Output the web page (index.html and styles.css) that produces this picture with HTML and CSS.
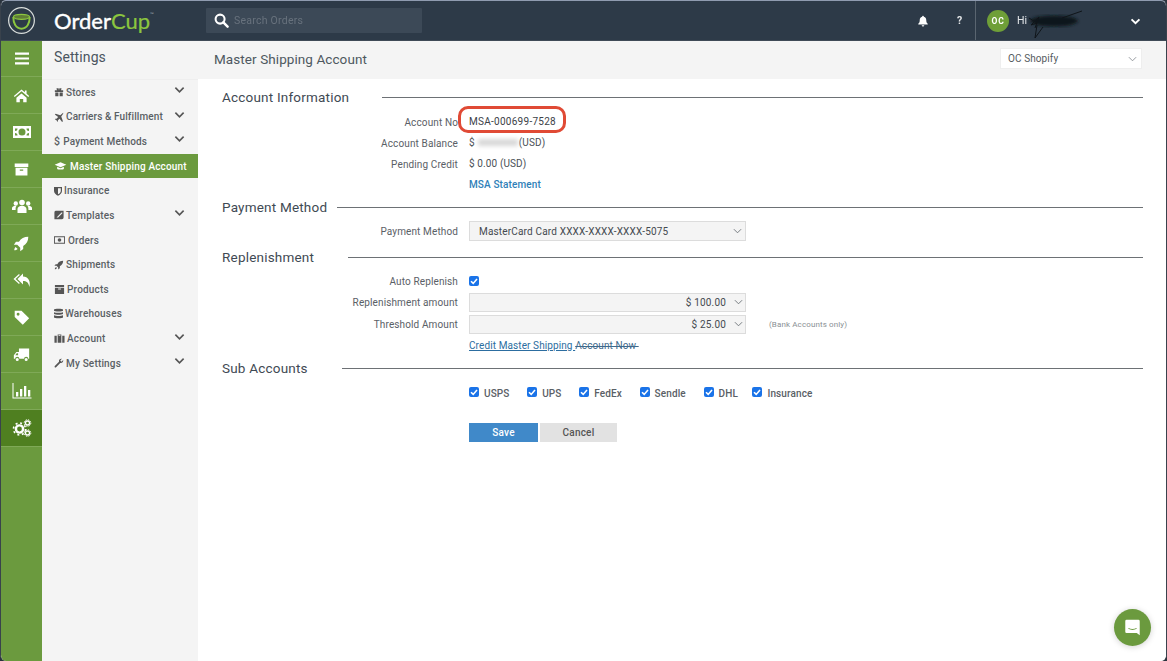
FILE: index.html
```html
<!DOCTYPE html>
<html lang="en">
<head>
<meta charset="utf-8">
<title>Master Shipping Account</title>
<link rel="stylesheet" href="styles.css">
</head>
<body>
<div class="app">
  <header class="topbar">
    <div class="brand">
      <svg class="logo" viewBox="0 0 30 30"><circle cx="15" cy="15" r="13.300" fill="none" stroke="#d5dad8" stroke-width="1.300"/><path d="M6.500 11.500C6.500 17.500 9 23.500 15 23.500S23.500 17.500 23.500 11.500" fill="none" stroke="#8cc63f" stroke-width="2"/><ellipse cx="15" cy="11.200" rx="8.300" ry="2.600" fill="#5f7d36" stroke="#8cc63f" stroke-width="1.200"/></svg>
      <span class="wordmark">Order<span class="wordmark-cup">Cup</span><sup class="tm">™</sup></span>
    </div>
    <div class="search">
      <svg class="search-icon" viewBox="0 0 16 16"><circle cx="6.500" cy="6.500" r="4.800" fill="none" stroke="#fff" stroke-width="2.200"/><path d="M10 10l4.500 4.500" stroke="#fff" stroke-width="2.600" stroke-linecap="round"/></svg>
      <span class="search-text">Search Orders</span>
    </div>
    <div class="top-actions">
      <svg class="bell" viewBox="0 0 14 14"><path d="M7 1a1 1 0 0 1 1 1c2 .5 2.800 2 2.800 4 0 2.500 1 3.500 1.700 4.300v.7h-11v-.7C2.200 9.500 3.200 8.500 3.200 6c0-2 .8-3.500 2.800-4a1 1 0 0 1 1-1zM5.500 12h3a1.500 1.500 0 0 1-3 0z" fill="#fff"/></svg>
      <span class="help">?</span>
    </div>
    <div class="user">
      <span class="avatar">OC</span>
      <span class="hi">Hi</span>
      <svg class="scribble" viewBox="0 0 60 36"><defs><filter id="sb"><feGaussianBlur stdDeviation="1.800"/></filter></defs><ellipse cx="28" cy="17" rx="24" ry="5.500" fill="#10151a" filter="url(#sb)"/><path d="M3 14l8 5-6 2 8-8-4 11M11 21l-2 13 8-11M36 14L56 7" stroke="#10151a" stroke-width="1" fill="none"/></svg>
      <svg class="user-chev" viewBox="0 0 12 8"><path d="M1.500 1.500L6 6l4.500-4.500" fill="none" stroke="#fff" stroke-width="2.200"/></svg>
    </div>
  </header>

  <div class="body">
    <nav class="rail">
      <a class="rail-item rail-lg"><svg viewBox="0 0 20 20"><path d="M3 3.500h14v2.200H3zM3 8.400h14v2.200H3zM3 13.300h14v2.200H3z" fill="#fff"/></svg></a>
      <a class="rail-item"><svg viewBox="0 0 20 20"><path d="M10 3L1 10.500l1 1.200 8-6.700 8 6.700 1-1.200-3-2.500V4h-2v2.200zM4 12.500L10 7.500l6 5V18h-4v-4H8v4H4z" fill="#fff"/></svg></a>
      <a class="rail-item rail-lg"><svg viewBox="0 0 20 20"><path fill-rule="evenodd" d="M1 4h18v12H1zM3 6.500v7h2.500a2.500 2.500 0 0 0-2.500-2.500V9a2.500 2.500 0 0 0 2.500-2.500zm14 0h-2.500A2.500 2.500 0 0 0 17 9v2a2.500 2.500 0 0 0-2.500 2.500H17zM10 6.500a3.500 3.500 0 1 0 0 7 3.500 3.500 0 0 0 0-7z" fill="#fff"/></svg></a>
      <a class="rail-item"><svg viewBox="0 0 20 20"><path fill-rule="evenodd" d="M2 3h16v4H2zM3 8h14v9H3zM8 10v1.500h4V10z" fill="#fff"/></svg></a>
      <a class="rail-item rail-lg"><svg viewBox="0 0 20 20"><g fill="#fff"><circle cx="10" cy="6.500" r="2.800"/><circle cx="3.800" cy="7.500" r="2.200"/><circle cx="16.200" cy="7.500" r="2.200"/><path d="M5.500 17v-4c0-2 2-3.300 4.500-3.300s4.500 1.300 4.500 3.300v4zM0 14v-2c0-1.300 1.500-2.300 3.500-2.300l1 .3c-.6.700-.9 1.500-.9 3v1zM20 14v-2c0-1.300-1.500-2.300-3.500-2.300l-1 .3c.6.700.9 1.500.9 3v1z"/></g></svg></a>
      <a class="rail-item"><svg viewBox="0 0 20 20"><path d="M18 2c-5 0-8.500 2-11 6H3.500L1 11.500h4L8.500 15v4l3.500-2.500V13c4-2.500 6-6 6-11zM3 14c-1 1-1.500 2.500-1.500 4 1.500 0 3-.5 4-1.500z" fill="#fff"/></svg></a>
      <a class="rail-item rail-lg"><svg viewBox="0 0 20 20"><path d="M11 3.500L5.500 9l5.500 5.500V11c3.500 0 5.500 1.500 6.500 6 1.300-6-1.500-10.500-6.500-10.500zM7 4L1.500 9 7 14l.8-.9L3.500 9l4.300-4.100z" fill="#fff"/></svg></a>
      <a class="rail-item"><svg viewBox="0 0 20 20"><path fill-rule="evenodd" d="M2 2h8l9 9-7.500 7.500-9.500-9zM6 4.500a1.700 1.700 0 1 0 0 3.400 1.700 1.700 0 0 0 0-3.400z" fill="#fff"/></svg></a>
      <a class="rail-item"><svg viewBox="0 0 20 20"><path fill-rule="evenodd" d="M7 3h12v12h-1a2.500 2.500 0 0 0-5 0H7.500a2.500 2.500 0 0 0-5 0H1v-4l3-4h3zM6 8.500H4.300L2.800 11H6zM5 14a1.800 1.800 0 1 1 0 3.600A1.800 1.800 0 0 1 5 14zm10.500 0a1.800 1.800 0 1 1 0 3.600 1.800 1.800 0 0 1 0-3.600z" fill="#fff"/></svg></a>
      <a class="rail-item rail-lg"><svg viewBox="0 0 20 20"><path d="M.5 2h1v14.500h18v1H.5zM4 11h2.300v4.500H4zM8 8h2.300v7.500H8zM12 5h2.300v10.500H12zM16 9h2.300v6.500H16z" fill="#fff"/></svg></a>
      <a class="rail-item rail-item-active rail-lg"><svg viewBox="0 0 20 20"><g fill="none" stroke="#fff"><circle cx="7.500" cy="11" r="3.600" stroke-width="2.400"/><circle cx="7.500" cy="11" r="6" stroke-width="1.600" stroke-dasharray="2 2.700"/><circle cx="15.500" cy="5" r="2" stroke-width="1.300"/><circle cx="15.500" cy="5" r="3.300" stroke-width="1" stroke-dasharray="1.500 1.100"/><circle cx="15.500" cy="15" r="2" stroke-width="1.300"/><circle cx="15.500" cy="15" r="3.300" stroke-width="1" stroke-dasharray="1.500 1.100"/></g></svg></a>
    </nav>

    <aside class="side">
      <h2 class="side-title">Settings</h2>
      <ul class="side-list">
        <li class="side-item"><svg class="si" viewBox="0 0 12 12"><path d="M1 4h10v2H1zM1.500 6.500h3.800V11H1.500zM6.700 6.500h3.800V11H6.700zM3 1.500h2.500L6 4H3.500zM9 1.500H6.500L6 4h2.500z" fill="#555"/></svg><span>Stores</span><svg class="chev" viewBox="0 0 12 8"><path d="M1.500 1.500L6 6l4.500-4.500" fill="none" stroke="#555" stroke-width="1.800"/></svg></li>
        <li class="side-item"><svg class="si" viewBox="0 0 12 12"><path d="M11 1L7.500 4 2 2 1 3l4 3-2 2H1.500L1 8.800l2 1 1 2 .7-.5V10l2-2 3 4 1-1-2-5.500L11 2z" fill="#555"/></svg><span class="tight">Carriers &amp; Fulfillment</span><svg class="chev" viewBox="0 0 12 8"><path d="M1.500 1.500L6 6l4.500-4.500" fill="none" stroke="#555" stroke-width="1.800"/></svg></li>
        <li class="side-item"><span class="dollar">$</span><span>Payment Methods</span><svg class="chev" viewBox="0 0 12 8"><path d="M1.500 1.500L6 6l4.500-4.500" fill="none" stroke="#555" stroke-width="1.800"/></svg></li>
        <li class="side-item side-item-active"><svg class="si si-wide" viewBox="0 0 14 12"><path d="M7 1.500L0 4.500l7 3 7-3zM3 7v2.500c1 1 7 1 8 0V7L7 8.700z" fill="#fff"/></svg><span>Master Shipping Account</span></li>
        <li class="side-item"><svg class="si si-narrow" viewBox="0 0 10 12"><path fill-rule="evenodd" d="M0 1h10v5c0 3-2.500 4.500-5 6-2.500-1.500-5-3-5-6zM5 2.500v7.700C6.800 9 8.500 8 8.500 6V2.500z" fill="#555"/></svg><span>Insurance</span></li>
        <li class="side-item"><svg class="si" viewBox="0 0 12 12"><path fill-rule="evenodd" d="M2 1h9.500v8a2 2 0 0 1-2 2H.5V3a2 2 0 0 1 1.500-2zM9 3L3 9h2l5-5V3z" fill="#555"/></svg><span>Templates</span><svg class="chev" viewBox="0 0 12 8"><path d="M1.500 1.500L6 6l4.500-4.500" fill="none" stroke="#555" stroke-width="1.800"/></svg></li>
        <li class="side-item"><svg class="si si-orders" viewBox="0 0 12 10"><path fill-rule="evenodd" d="M0 1h12v8H0zM1 2v6h10V2zM6 3a2 2 0 1 1 0 4 2 2 0 0 1 0-4z" fill="#555"/></svg><span>Orders</span></li>
        <li class="side-item"><svg class="si" viewBox="0 0 12 12"><path d="M11 1C8 1 5.500 2.300 4 5H2L.5 7H3l2 2v2.500L7 10V7.500C9.500 6 11 4 11 1zM2.500 8.500C1.500 9 1 10 1 11c1 0 2-.5 2.500-1.500z" fill="#555"/></svg><span>Shipments</span></li>
        <li class="side-item"><svg class="si si-box" viewBox="0 0 12 12"><path fill-rule="evenodd" d="M1 1h10v10H1zM1 4h10v-.8H1zM4.500 5v1h3V5z" fill="#555"/></svg><span>Products</span></li>
        <li class="side-item"><svg class="si si-db" viewBox="0 0 10 12"><path d="M0 1.500C0 .5 10 .5 10 1.500V3C10 4 0 4 0 3zM0 4.500c2 1 8 1 10 0V6.500c-2 1-8 1-10 0zM0 8c2 1 8 1 10 0v2.500c0 1-10 1-10 0z" fill="#555"/></svg><span>Warehouses</span></li>
        <li class="side-item"><svg class="si si-box" viewBox="0 0 12 12"><path fill-rule="evenodd" d="M4 3V1.500h4V3h3.500v7.500H.5V3zM5 3h2v-.7H5zM3 3v7.500h1V3zM8 3v7.500h1V3z" fill="#555"/></svg><span>Account</span><svg class="chev" viewBox="0 0 12 8"><path d="M1.500 1.500L6 6l4.500-4.500" fill="none" stroke="#555" stroke-width="1.800"/></svg></li>
        <li class="side-item"><svg class="si" viewBox="0 0 12 12"><path d="M11 2.500L9 4.500 7.500 3l2-2C7.500.5 5.500 2 6 4.500L1 9.500c-1 1 .5 2.500 1.500 1.500L7.500 6C10 6.500 11.500 4.500 11 2.500z" fill="#555"/></svg><span>My Settings</span><svg class="chev" viewBox="0 0 12 8"><path d="M1.500 1.500L6 6l4.500-4.500" fill="none" stroke="#555" stroke-width="1.800"/></svg></li>
      </ul>
    </aside>

    <main class="main">
      <div class="page-head">
        <h1 class="page-title">Master Shipping Account</h1>
        <div class="store-select"><span>OC Shopify</span><svg class="sel-chev" viewBox="0 0 10 6"><path d="M1 1l4 4 4-4" fill="none" stroke="#8a8f94" stroke-width="1"/></svg></div>
      </div>

      <div class="content">
        <section class="sec sec-info">
          <div class="sec-head"><h3 class="sec-title sec-title-info">Account Information</h3><span class="sec-line"></span></div>
          <div class="row row-first"><span class="lbl">Account No</span><span class="val val-mark">MSA-000699-7528<span class="mark"></span></span></div>
          <div class="row"><span class="lbl">Account Balance</span><span class="val">$<span class="smudge"></span>(USD)</span></div>
          <div class="row"><span class="lbl">Pending Credit</span><span class="val">$ 0.00 (USD)</span></div>
          <div class="row"><span class="lbl"></span><a class="val link">MSA Statement</a></div>
        </section>

        <section class="sec sec-pay">
          <div class="sec-head"><h3 class="sec-title sec-title-pay">Payment Method</h3><span class="sec-line"></span></div>
          <div class="row row-field row-pay"><span class="lbl">Payment Method</span><div class="field"><span>MasterCard Card XXXX-XXXX-XXXX-5075</span><svg class="sel-chev" viewBox="0 0 10 6"><path d="M1 1l4 4 4-4" fill="none" stroke="#6a7075" stroke-width="1"/></svg></div></div>
        </section>

        <section class="sec sec-rep">
          <div class="sec-head"><h3 class="sec-title sec-title-rep">Replenishment</h3><span class="sec-line"></span></div>
          <div class="row row-check"><span class="lbl">Auto Replenish</span><span class="box"><svg viewBox="0 0 10 10"><path d="M2 5.200l2.200 2.200L8 3" fill="none" stroke="#fff" stroke-width="1.600"/></svg></span></div>
          <div class="row row-field row-amt"><span class="lbl">Replenishment amount</span><div class="field field-amt"><span>$ 100.00</span><svg class="sel-chev" viewBox="0 0 10 6"><path d="M1 1l4 4 4-4" fill="none" stroke="#6a7075" stroke-width="1"/></svg></div></div>
          <div class="row row-field row-amt"><span class="lbl">Threshold Amount</span><div class="field field-amt"><span>$ 25.00</span><svg class="sel-chev" viewBox="0 0 10 6"><path d="M1 1l4 4 4-4" fill="none" stroke="#6a7075" stroke-width="1"/></svg></div><span class="hint">(Bank Accounts only)</span></div>
          <div class="row row-credit"><span class="lbl"></span><a class="credit"><span class="credit-under">Credit Master Shipping </span><span class="credit-strike">Account Now&nbsp;</span></a></div>
        </section>

        <section class="sec sec-sub">
          <div class="sec-head"><h3 class="sec-title sec-title-sub">Sub Accounts</h3><span class="sec-line"></span></div>
          <div class="row row-subs"><span class="lbl"></span>
            <div class="checks">
              <span class="check"><span class="box"><svg viewBox="0 0 10 10"><path d="M2 5.200l2.200 2.200L8 3" fill="none" stroke="#fff" stroke-width="1.600"/></svg></span>USPS</span>
              <span class="check"><span class="box"><svg viewBox="0 0 10 10"><path d="M2 5.200l2.200 2.200L8 3" fill="none" stroke="#fff" stroke-width="1.600"/></svg></span>UPS</span>
              <span class="check"><span class="box"><svg viewBox="0 0 10 10"><path d="M2 5.200l2.200 2.200L8 3" fill="none" stroke="#fff" stroke-width="1.600"/></svg></span>FedEx</span>
              <span class="check"><span class="box"><svg viewBox="0 0 10 10"><path d="M2 5.200l2.200 2.200L8 3" fill="none" stroke="#fff" stroke-width="1.600"/></svg></span>Sendle</span>
              <span class="check"><span class="box"><svg viewBox="0 0 10 10"><path d="M2 5.200l2.200 2.200L8 3" fill="none" stroke="#fff" stroke-width="1.600"/></svg></span>DHL</span>
              <span class="check"><span class="box"><svg viewBox="0 0 10 10"><path d="M2 5.200l2.200 2.200L8 3" fill="none" stroke="#fff" stroke-width="1.600"/></svg></span>Insurance</span>
            </div>
          </div>
          <div class="row row-btns"><span class="lbl"></span><div class="btns"><button class="btn btn-save">Save</button><button class="btn btn-cancel">Cancel</button></div></div>
        </section>
      </div>
    </main>
  </div>

  <div class="chat"><svg viewBox="0 0 20 20"><path fill-rule="evenodd" d="M3 1h14a1.500 1.500 0 0 1 1.500 1.500V19l-3.500-2.500H3A1.500 1.500 0 0 1 1.500 15V2.500A1.500 1.500 0 0 1 3 1zM5 11.500c3 1.800 7 1.800 10 0l-.4-.9c-2.800 1.500-6.400 1.500-9.200 0z" fill="#fff"/></svg></div>
</div>
</body>
</html>
```
FILE: styles.css
```css
* { box-sizing: border-box; }
html, body { margin: 0; height: 100%; overflow: hidden; background: #2a333d; }
body { font-family: Roboto, "Liberation Sans", sans-serif; color: #4a5056; }
h1, h2, h3, ul { margin: 0; padding: 0; font-weight: 400; }
ul { list-style: none; }

.app { position: relative; width: 1167px; height: 661px; display: flex; flex-direction: column; background: #fff; overflow: hidden; border-radius: 6px; border-top: 1px solid #8f9bb0; border-left: 1px solid #39424c; border-right: 1px solid #39424c; filter: blur(.45px); }

.topbar { flex: 0 0 40px; display: flex; align-items: center; background: #2d3a48; color: #fff; border-bottom: 1px solid #3f4a57; }
.brand { width: 205px; display: flex; align-items: center; }
.logo { width: 29px; height: 29px; margin-left: 6px; }
.wordmark { margin-left: 18px; font-family: Lato, Roboto, sans-serif; font-size: 22px; font-weight: 400; line-height: 30px; color: #fff; -webkit-text-stroke: .4px #fff; }
.wordmark-cup { color: #8cc63f; -webkit-text-stroke: .2px #8cc63f; }
.tm { font-size: 5px; color: #9ba5ad; vertical-align: 13px; line-height: 0; -webkit-text-stroke: 0; }

.search { width: 216px; height: 25px; display: flex; align-items: center; background: #3c4957; border-radius: 1px; }
.search-icon { width: 15px; height: 15px; margin-left: 8px; }
.search-text { margin-left: 5px; font-size: 10.500px; letter-spacing: .25px; color: #68727d; }

.top-actions { margin-left: auto; display: flex; align-items: center; height: 100%; }
.bell { width: 12px; height: 12px; margin-right: 28px; }
.help { width: 7px; margin-right: 11px; font-size: 10.500px; font-weight: 700; color: #e4e6e8; }

.user { width: 191px; height: 100%; display: flex; align-items: center; border-left: 1px solid #5a6570; position: relative; }
.avatar { width: 22px; height: 22px; margin-left: 11px; display: flex; align-items: center; justify-content: center; border-radius: 50%; background: #6f9f38; font-size: 8.500px; font-weight: 700; letter-spacing: .7px; color: #fff; }
.hi { margin-left: 8px; font-size: 10.500px; color: #e2e5e8; }
.scribble { position: absolute; left: 50px; top: 3px; width: 60px; height: 36px; }
.user-chev { position: absolute; left: 154px; top: 17px; width: 11px; height: 7px; }

.body { flex: 1; min-height: 0; display: flex; }

.rail { flex: 0 0 41px; background: #6b9a3e; display: flex; flex-direction: column; }
.rail-item { flex: 0 0 37px; display: flex; align-items: center; justify-content: center; border-bottom: 1px solid #7fa957; }
.rail-item:first-child { flex-basis: 36px; }
.rail-item svg { width: 17px; height: 17px; }
.rail-lg svg { width: 20px; height: 20px; }
.rail-item-active { background: #4f7f20; }

.side { flex: 0 0 156px; background: #f4f4f4; display: flex; flex-direction: column; }
.side-title { flex: none; height: 38.900px; padding-left: 12px; font-size: 14px; line-height: 33px; letter-spacing: .1px; color: #4a5560; border-bottom: 1px solid #eeeeee; }
.side-list { display: flex; flex-direction: column; }
.side-item { height: 24.650px; display: flex; align-items: center; padding-left: 12px; font-size: 10px; font-weight: 500; letter-spacing: .17px; color: #5a5f64; }
.side-item .tight { letter-spacing: .1px; }
.side-item-active { background: #6b9a3e; color: #fff; }
.si { flex: none; width: 10px; height: 10px; margin-right: 2px; }
.si-wide { width: 13px; margin-right: 3px; }
.si-narrow { width: 8px; margin-right: 2px; }
.si-orders { width: 11px; margin-right: 3px; }
.si-box { width: 11px; height: 11px; margin-right: 2px; }
.si-db { width: 9px; height: 11px; margin-right: 2px; }
.dollar { margin-right: 3px; font-size: 10.500px; }
.chev { flex: none; width: 11px; height: 8px; margin: -4px 13px 0 auto; }

.main { flex: 1; min-width: 0; display: flex; flex-direction: column; background: #fff; }
.page-head { flex: 0 0 38px; display: flex; align-items: center; justify-content: space-between; padding: 0 24px 3px 16px; background: #f4f4f4; }
.page-title { font-size: 13.500px; letter-spacing: .08px; color: #4e5860; }
.store-select { width: 142px; height: 21px; display: flex; align-items: center; justify-content: space-between; padding: 0 4px 0 7px; background: #fff; border: 1px solid #eeeeee; font-size: 10px; letter-spacing: .1px; color: #555b60; }
.sel-chev { flex: none; width: 9px; height: 6px; }

.content { padding: 0 23px 0 24px; }
.sec-head { display: flex; align-items: center; height: 20px; }
.sec-title { font-size: 13.500px; letter-spacing: .2px; color: #3f4a54; white-space: nowrap; }
.sec-line { flex: 1; height: 1px; background: #6d7175; margin-top: 1px; }
.sec-title-info { margin-right: 33px; }
.sec-title-pay { margin-right: 10px; }
.sec-title-rep { margin-right: 34px; }
.sec-title-sub { margin-right: 34px; }

.sec-info { padding-top: 8px; }
.sec-pay { padding-top: 1px; }
.sec-rep { padding-top: 6px; }
.sec-sub { padding-top: 3px; }

.row { display: grid; grid-template-columns: 236px 1fr; column-gap: 11px; align-items: center; height: 21px; font-size: 10px; letter-spacing: .12px; }
.row-first { margin-top: 5px; }
.lbl { text-align: right; color: #5a6066; }
.val { color: #4a5056; justify-self: start; position: relative; margin-top: -2px; }
.link { color: #2f7fb8; font-weight: 500; }
.val-mark { letter-spacing: .27px; color: #3c4248; }
.mark { position: absolute; left: -11px; top: -10px; width: 108px; height: 27px; border: 3px solid #e04a35; border-radius: 10px; }
.smudge { display: inline-block; width: 40px; height: 7px; margin: 0 1px 0 3px; background: #d8d8d8; filter: blur(2px); }

.row-field { grid-template-columns: 236px 277px auto; }
.row-pay { margin-top: 4px; height: 20px; }
.field { height: 20px; display: flex; align-items: center; justify-content: space-between; padding: 0 3px 0 9px; background: #f4f4f4; border: 1px solid #dcdcdc; font-size: 10px; letter-spacing: .17px; color: #444a50; }
.field-amt { justify-content: flex-end; gap: 8px; height: 19px; padding-right: 2px; }
.row-amt { height: 22px; }
.row-check { margin-top: 4px; height: 20px; }
.box { flex: none; width: 10px; height: 10px; display: block; border-radius: 2px; background: #1a73e8; }
.box svg { display: block; width: 10px; height: 10px; }
.hint { margin-left: 12px; font-size: 8px; color: #8a8f94; }
.row-credit { height: 20px; margin-top: 0; }
.credit { color: #2c6da0; justify-self: start; white-space: nowrap; letter-spacing: .1px; }
.credit-under { text-decoration: underline; }
.credit-strike { color: #3f6a8c; text-decoration: line-through; }
.row-subs { margin-top: 5px; height: 20px; }
.checks { display: flex; }
.check { display: flex; align-items: center; gap: 5px; margin-right: 17.700px; font-weight: 500; color: #5a6066; }
.check:nth-child(5) { margin-right: 14.500px; }
.check .box { margin-top: -3px; }
.row-btns { margin-top: 20px; height: 19px; }
.btns { display: flex; gap: 2px; }
.btn { height: 19px; border: 0; padding: 0; font: 500 10px Roboto, sans-serif; letter-spacing: .2px; cursor: pointer; }
.btn-save { width: 69px; background: #4089c9; color: #fff; }
.btn-cancel { width: 77px; background: #e2e2e2; color: #555; }

.chat { position: absolute; left: 1113px; top: 608px; width: 37px; height: 37px; display: flex; align-items: center; justify-content: center; border-radius: 50%; background: #6b9a3e; box-shadow: 0 1px 6px rgba(0,0,0,.18); }
.chat svg { width: 17px; height: 19px; }
```
